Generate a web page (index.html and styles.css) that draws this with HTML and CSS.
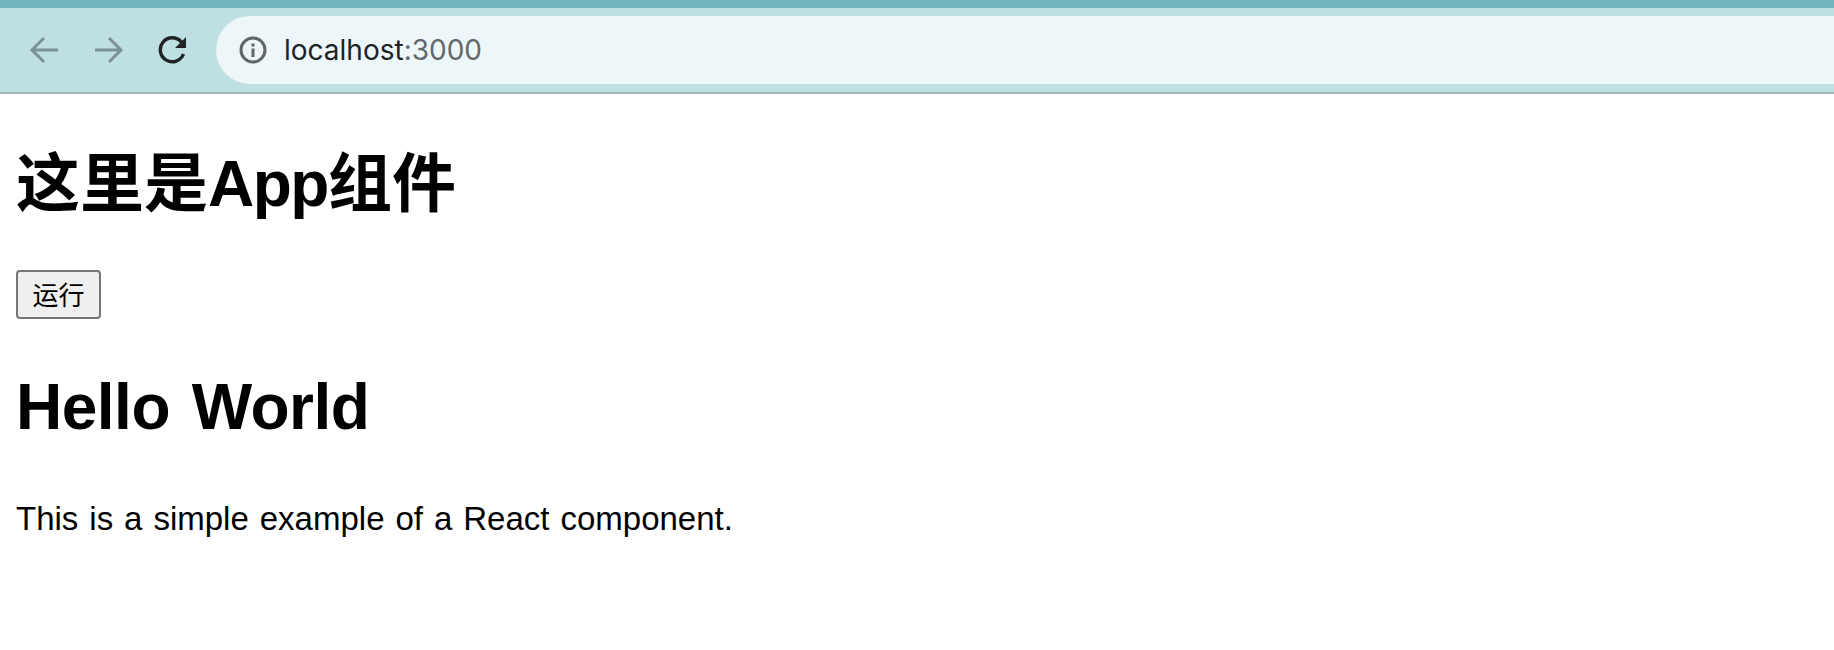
FILE: index.html
```html
<!DOCTYPE html>
<html lang="en">
<head>
    <meta charset="UTF-8">
    <meta name="viewport" content="width=device-width, initial-scale=1.0">
    <title>localhost:3000</title>
    <link rel="stylesheet" href="styles.css">
</head>
<body>

<header class="browser-bar">
  <div class="top-strip"></div>
  <div class="toolbar">
    <div class="nav-icons">
      <svg class="nav-icon" viewBox="0 0 30 30" fill="none" stroke="#7d9296" stroke-width="3">
        <path d="M29 15H3M15 3L3 15l12 12"/>
      </svg>
      <svg class="nav-icon" viewBox="0 0 30 30" fill="none" stroke="#7d9296" stroke-width="3">
        <path d="M1 15h26M15 3l12 12-12 12"/>
      </svg>
      <svg class="nav-icon" viewBox="0 0 30 30" fill="none" stroke="#202426" stroke-width="3.400">
        <path d="M25.500 19a12 12 0 1 1-2.200-12.200L27 10"/>
        <path d="M28 2v11H17z" fill="#202426" stroke="none"/>
      </svg>
    </div>
    <div class="address-pill">
      <svg class="info-icon" viewBox="0 0 28 28" fill="none">
        <circle cx="14" cy="14" r="12" stroke="#5f6568" stroke-width="3"/>
        <path d="M12.500 12.500h3V21h-3zM12.500 7.500h3v3h-3z" fill="#5f6568"/>
      </svg>
      <span class="url">localhost<span class="port">:3000</span></span>
    </div>
  </div>
</header>

<main class="page">
  <h1 class="title">这里是<span class="latin">App</span>组件</h1>
  <button type="button" class="run-btn">运行</button>
  <h1 class="hello">Hello World</h1>
  <p>This is a simple example of a React component.</p>
</main>

</body>
</html>
```

FILE: styles.css
```css
/* Global styles */

* {
  box-sizing: border-box;
  margin: 0;
  padding: 0;
}

body {
  font-family: "Liberation Sans", "Noto Sans CJK SC", sans-serif;
  color: #000;
  background-color: #fff;
}

/* Browser chrome */

.browser-bar {
  background-color: #bfe0e2;
  border-bottom: 2px solid #9fb4ba;
  height: 94px;
}

.top-strip {
  height: 8px;
  background-color: #74b6bf;
}

.toolbar {
  display: flex;
  padding-top: 8px;
  height: 84px;
}

.nav-icons {
  display: flex;
  align-items: center;
  gap: 34.500px;
  width: 216px;
  height: 68px;
  padding-left: 29px;
}

.nav-icon {
  width: 30px;
  height: 30px;
}

.address-pill {
  flex: 1;
  display: flex;
  align-items: center;
  height: 68px;
  padding-left: 23px;
  background-color: #edf6f8;
  border-radius: 34px 0 0 34px;
}

.info-icon {
  width: 28px;
  height: 28px;
  margin-right: 17px;
}

.url {
  font-family: Inter, "Liberation Sans", sans-serif;
  font-size: 28px;
  color: #1f2224;
}

.port {
  color: #63686b;
}

/* Page content */

.page {
  padding: 0 16px;
}

h1 {
  font-size: 64px;
  font-weight: bold;
  line-height: 74px;
}

.title {
  margin-top: 53px;
}

.latin {
  letter-spacing: -1.500px;
}

.run-btn {
  display: block;
  width: 85px;
  height: 49px;
  margin-top: 49px;
  padding-bottom: 3px;
  font-family: inherit;
  font-size: 26px;
  color: #000;
  background-color: #efefef;
  border: 2px solid #767676;
  border-radius: 4px;
}

.hello {
  margin-top: 51px;
  letter-spacing: -0.500px;
  word-spacing: 4.500px;
}

p {
  font-size: 33px;
  line-height: 37px;
  margin-top: 56px;
  word-spacing: 1.800px;
}
```
